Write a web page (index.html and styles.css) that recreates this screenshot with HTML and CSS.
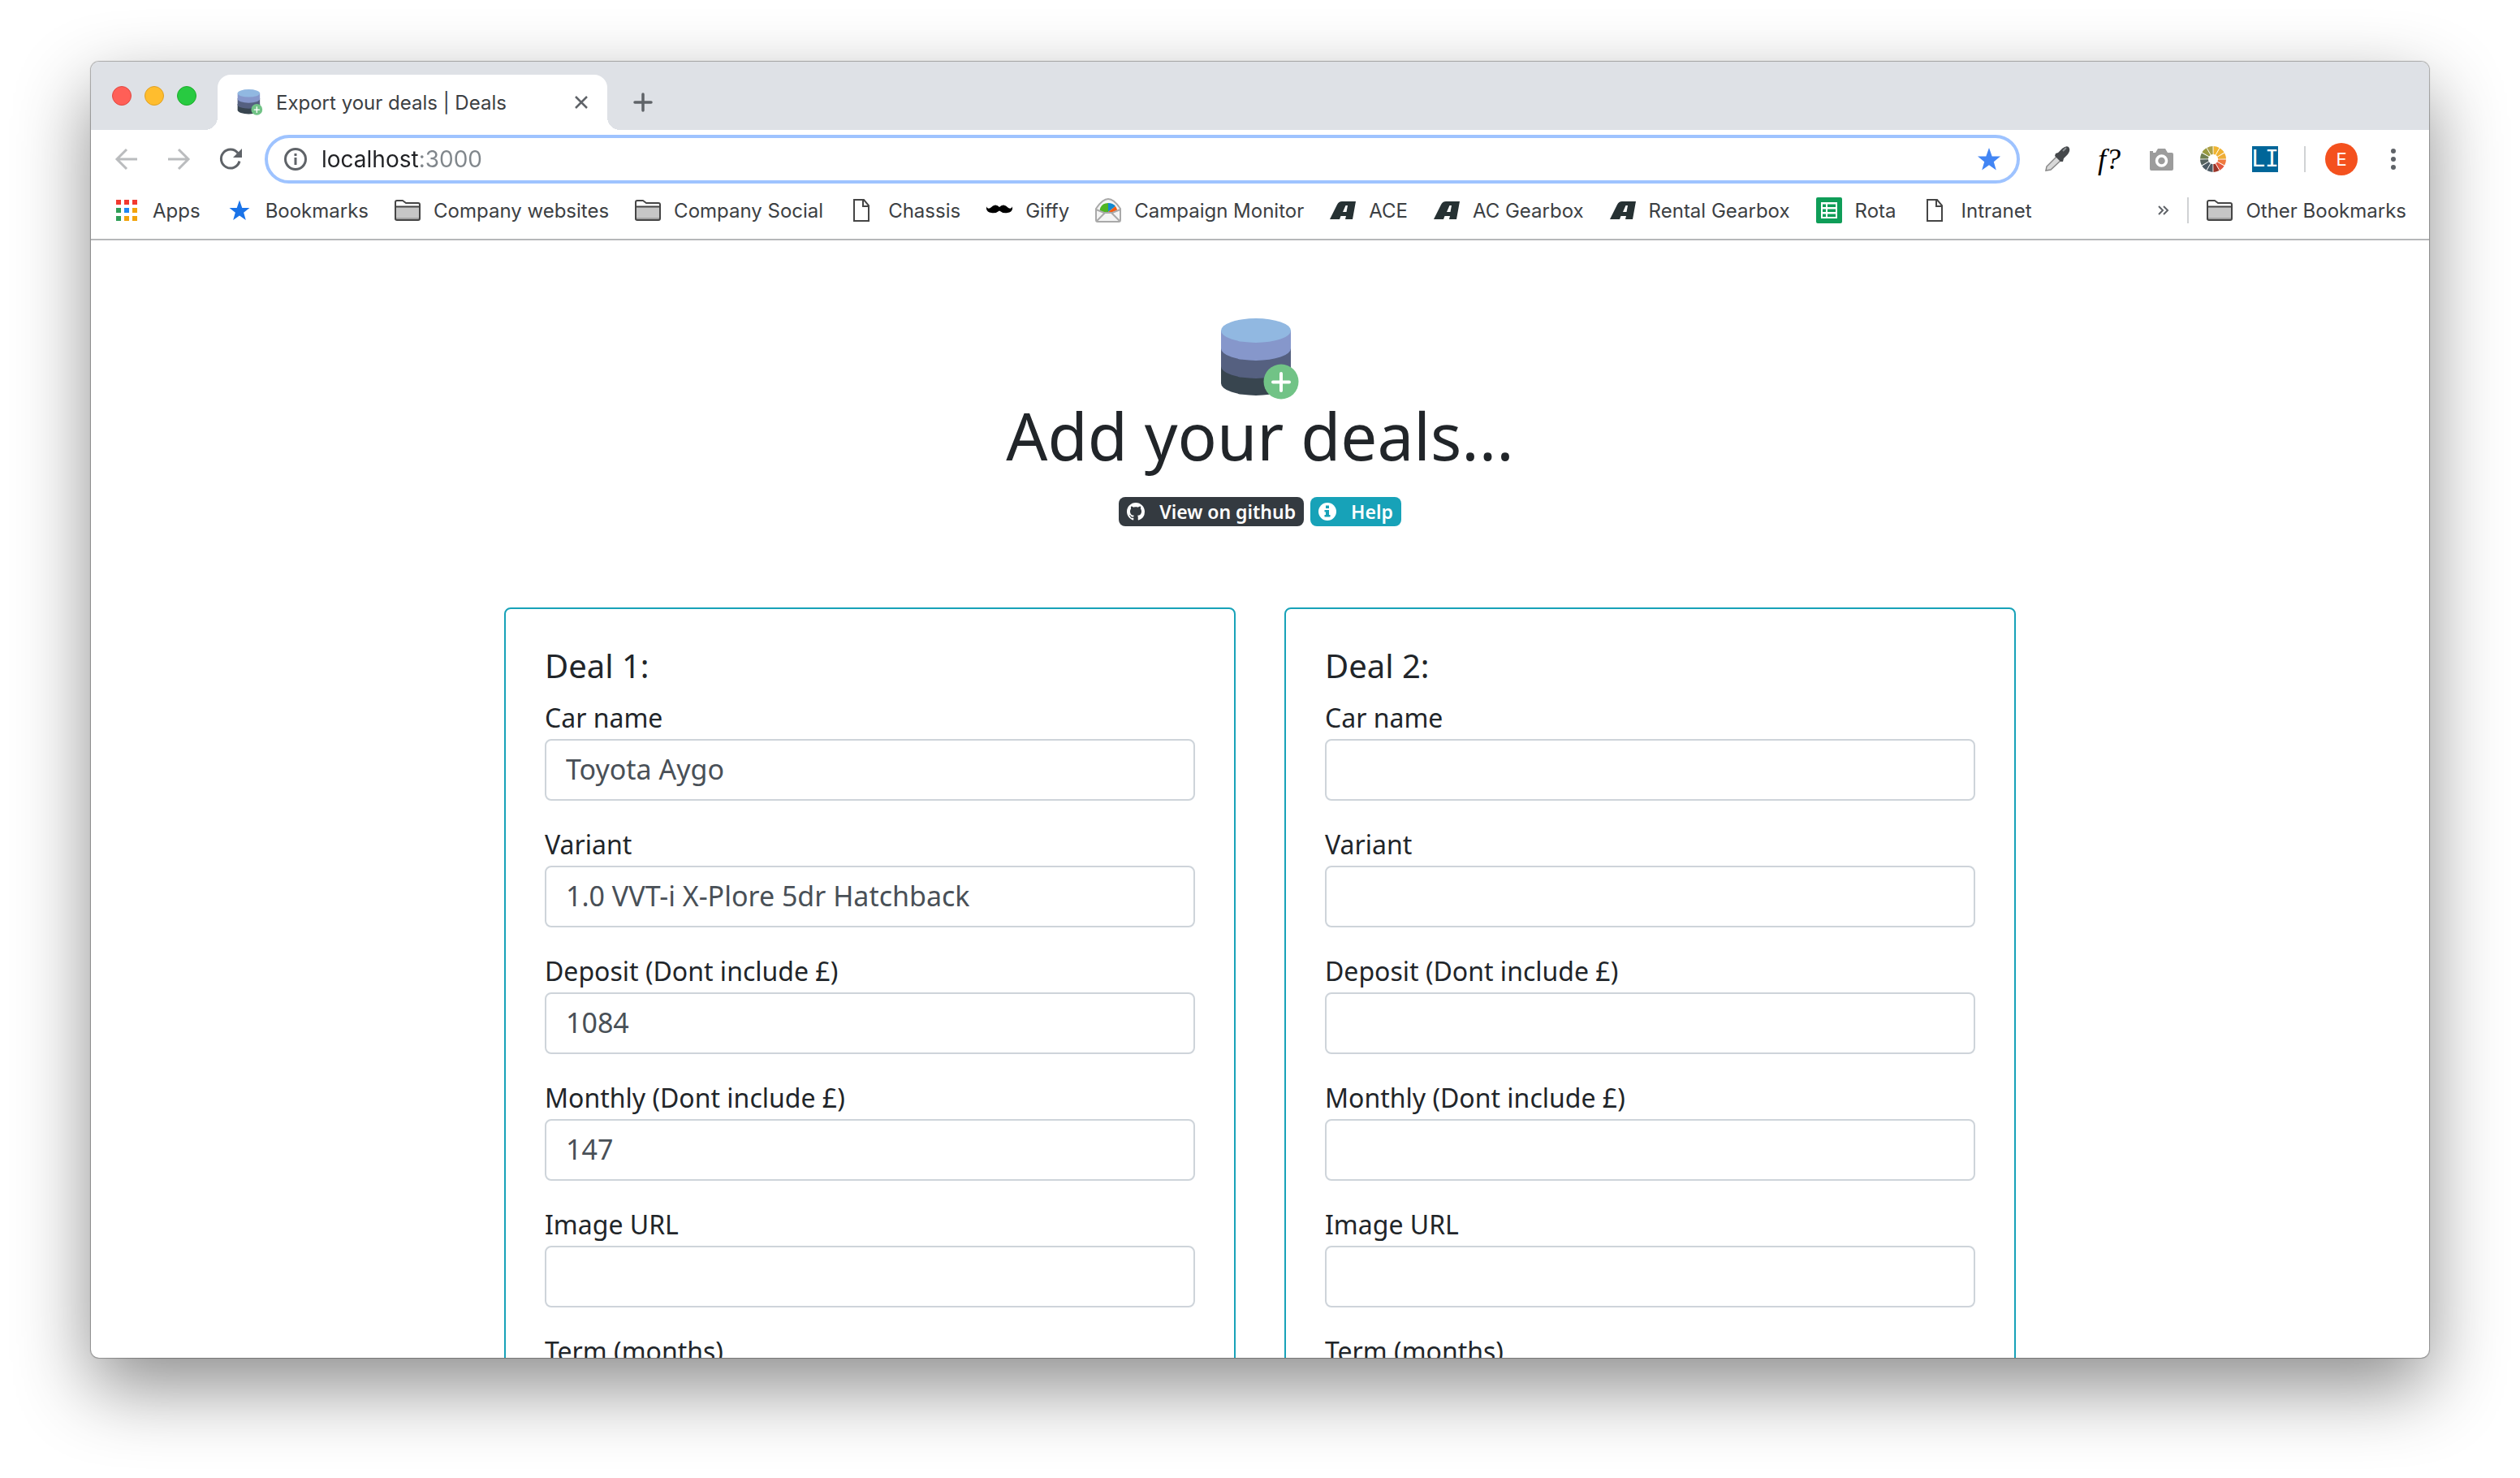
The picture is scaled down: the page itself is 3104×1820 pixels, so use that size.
FILE: index.html
```
<!DOCTYPE html>
<html lang="en">
<head>
<meta charset="utf-8">
<title>Export your deals | Deals</title>
<link rel="stylesheet" href="styles.css">
</head>
<body>
<svg class="defs" aria-hidden="true">
  <symbol id="database" viewBox="0 0 96 100">
    <path fill="#38454f" d="M0 56V80A43 15 0 0 0 86 80V56Z"/>
    <path fill="#556080" d="M0 34V59A43 15 0 0 0 86 59V34Z"/>
    <path fill="#8697cb" d="M0 15V37A43 15 0 0 0 86 37V15Z"/>
    <ellipse fill="#91b8e1" cx="43" cy="15" rx="43" ry="15"/>
    <circle fill="#71c386" cx="74" cy="78" r="21.5"/>
    <path stroke="#fff" stroke-width="4" stroke-linecap="round" d="M64 78.500H84M74 68V89"/>
  </symbol>
  <symbol id="folder" viewBox="0 0 32 32">
    <path fill="#fff" d="M1 27V6Q1 4 3 4H10L14 7H29Q31 7 31 9V27Z"/>
    <path fill="#c6c6c6" d="M1 12H31V27H1Z"/>
    <path fill="#a3a3a3" d="M1 25H31V28H1Z"/>
    <path fill="none" stroke="#454545" stroke-width="2" stroke-linejoin="round" d="M1 27V6Q1 4 3 4H10L14 7H29Q31 7 31 9V26Q31 28 29 28H3Q1 28 1 26ZM1 11.500H31"/>
  </symbol>
  <symbol id="page" viewBox="0 0 32 32">
    <path fill="#fff" stroke="#454545" stroke-width="2" d="M6 3H18L24 10V29H6ZM17 3V11H24"/>
  </symbol>
  <symbol id="star" viewBox="0 0 32 32">
    <path d="M16 2L19.700 12.600H30L21.800 19.200L24.800 29.500L16 23.200L7.200 29.500L10.200 19.200L2 12.600H12.300Z"/>
  </symbol>
  <symbol id="gearbox" viewBox="0 0 32 32">
    <path fill="#263133" fill-rule="evenodd" d="M0 27L9 9Q11 5 15 5H32L28 27H19L20 23H13.500L12 27ZM16 18H20.500L22 10H19.500Z"/>
  </symbol>
</svg>

<main class="window">
  <header class="tabs">
    <div class="lights">
      <button class="light close" aria-label="Close window"></button>
      <button class="light minimise" aria-label="Minimise window"></button>
      <button class="light zoom" aria-label="Zoom window"></button>
    </div>
    <div class="tab">
      <svg class="favicon"><use href="#database"/></svg>
      <span class="tab-title">Export your deals | Deals</span>
      <button class="icon-button" aria-label="Close tab"><svg class="cross" viewBox="0 0 16 16"><path d="M1 1L15 15M15 1L1 15" stroke="#5f6368" stroke-width="2.500"/></svg></button>
    </div>
    <button class="icon-button new-tab" aria-label="New tab"><svg class="plus" viewBox="0 0 24 24"><path d="M12 2V22M2 12H22" stroke="#5f6368" stroke-width="3.500" stroke-linecap="round"/></svg></button>
  </header>

  <nav class="toolbar">
    <div class="nav-buttons">
      <button class="icon-button" aria-label="Back"><svg class="icon" viewBox="0 0 32 32"><path d="M29 16H5M16 4L4 16L16 28" fill="none" stroke="#babcbe" stroke-width="3"/></svg></button>
      <button class="icon-button" aria-label="Forward"><svg class="icon" viewBox="0 0 32 32"><path d="M3 16H27M16 4L28 16L16 28" fill="none" stroke="#babcbe" stroke-width="3"/></svg></button>
      <button class="icon-button" aria-label="Reload"><svg class="icon" viewBox="0 0 32 32"><path d="M27 18.500A11.500 11.500 0 1 1 25 8.500" fill="none" stroke="#5f6368" stroke-width="3"/><path d="M30 3V14H19Z" fill="#5f6368"/></svg></button>
    </div>
    <div class="omnibox">
      <svg class="info" viewBox="0 0 28 28"><circle cx="14" cy="14" r="12.500" fill="none" stroke="#5f6368" stroke-width="3"/><path d="M14 12V21M14 7V10" stroke="#5f6368" stroke-width="3"/></svg>
      <input class="address" type="text" aria-label="Address" value="localhost:3000">
      <button class="icon-button" aria-label="Bookmark this page"><svg class="icon star-blue"><use href="#star"/></svg></button>
    </div>
    <div class="extensions">
      <button class="icon-button" aria-label="Eyedropper"><svg class="icon" viewBox="0 0 32 32"><path d="M2 30L3 25L16 12L21 17L8 29Z" fill="#d8d8d8" stroke="#888" stroke-width="1.500"/><path d="M14 9L17 8L22 3Q27-1 30 1Q33 5 29 10L24 15L23 19L20 19L13 12Z" fill="#45484b"/><path d="M23 6L27 2" stroke="#8b8f92" stroke-width="2"/></svg></button>
      <button class="icon-button font-icon" aria-label="WhatFont">f?</button>
      <button class="icon-button" aria-label="Screenshot"><svg class="icon" viewBox="0 0 32 32"><path d="M2 10V6H6V8H9L12 3H21L24 8H29Q31 8 31 10V28Q31 30 29 30H4Q2 30 2 28Z" fill="#9c9c9c"/><circle cx="16.500" cy="18" r="6" fill="none" stroke="#fff" stroke-width="3.500"/></svg></button>
      <button class="icon-button" aria-label="Colour wheel"><svg class="icon" viewBox="-16 -16 32 32">
        <defs><path id="wedge" d="M.5-16A16 16 0 0 1 7.600-14.100L2.800-5.400A6 6 0 0 0 .5-6Z"/></defs>
        <use href="#wedge" fill="#efb430"/>
        <use href="#wedge" fill="#f0b232" transform="rotate(30)"/>
        <use href="#wedge" fill="#efad36" transform="rotate(60)"/>
        <use href="#wedge" fill="#f07a3e" transform="rotate(90)"/>
        <use href="#wedge" fill="#e2573f" transform="rotate(120)"/>
        <use href="#wedge" fill="#9c3428" transform="rotate(150)"/>
        <use href="#wedge" fill="#4d5b65" transform="rotate(180)"/>
        <use href="#wedge" fill="#4d5b65" transform="rotate(210)"/>
        <use href="#wedge" fill="#55625f" transform="rotate(240)"/>
        <use href="#wedge" fill="#6f7f50" transform="rotate(270)"/>
        <use href="#wedge" fill="#989a40" transform="rotate(300)"/>
        <use href="#wedge" fill="#aca148" transform="rotate(330)"/>
      </svg></button>
      <button class="icon-button lorem-icon" aria-label="Lorem Ipsum">LI</button>
    </div>
    <span class="divider"></span>
    <button class="avatar" aria-label="Profile">E</button>
    <button class="icon-button" aria-label="Menu"><svg class="dots" viewBox="0 0 8 28" fill="#5f6368"><circle cx="4" cy="4" r="3"/><circle cx="4" cy="14" r="3"/><circle cx="4" cy="24" r="3"/></svg></button>
  </nav>

  <nav class="bookmarks">
    <a class="bookmark" href="#"><svg class="icon" viewBox="0 0 32 32"><path fill="#f2392f" d="M3 3h6v6H3zM13 3h6v6h-6zM23 3h6v6h-6z"/><path fill="#2f9e57" d="M3 13h6v6H3zM3 23h6v6H3z"/><path fill="#1f88f2" d="M13 13h6v6h-6z"/><path fill="#f2a30c" d="M23 13h6v6h-6zM13 23h6v6h-6zM23 23h6v6h-6z"/></svg>Apps</a>
    <a class="bookmark" href="#"><svg class="icon star-mark" viewBox="-2 -2 36 36"><use href="#star" width="32" height="32"/></svg>Bookmarks</a>
    <a class="bookmark" href="#"><svg class="icon"><use href="#folder"/></svg>Company websites</a>
    <a class="bookmark" href="#"><svg class="icon"><use href="#folder"/></svg>Company Social</a>
    <a class="bookmark" href="#"><svg class="icon"><use href="#page"/></svg>Chassis</a>
    <a class="bookmark" href="#"><svg class="icon" viewBox="0 0 32 32"><path d="M0 11Q1 15 5 13Q8 9.500 11 9.500Q14 9.500 16 12Q18 9.500 21 9.500Q24 9.500 27 13Q31 15 32 11Q33 18 26 19Q20 20 16 16.500Q12 20 6 19Q-1 18 0 11Z"/></svg>Giffy</a>
    <a class="bookmark" href="#"><svg class="icon" viewBox="0 0 32 32"><path fill="#f4f4f4" stroke="#a9a9a9" stroke-width="2" stroke-linejoin="round" d="M1 14Q9 2 16 2Q23 2 31 14V28Q31 30 29 30H3Q1 30 1 28Z"/><path fill="#4fb523" d="M16 18H8Q5 18 6 14Q8 7 16 7Z"/><path fill="#1289cf" d="M16 18V7Q22 7 25 11Z"/><path fill="#f85a10" d="M16 18L25 11Q27 14 27 16L22 18Z"/><path fill="none" stroke="#a9a9a9" stroke-width="2" d="M1 15L11 19H21L31 15M2 29L12 19M30 29L20 19"/></svg>Campaign Monitor</a>
    <a class="bookmark" href="#"><svg class="icon"><use href="#gearbox"/></svg>ACE</a>
    <a class="bookmark" href="#"><svg class="icon"><use href="#gearbox"/></svg>AC Gearbox</a>
    <a class="bookmark" href="#"><svg class="icon"><use href="#gearbox"/></svg>Rental Gearbox</a>
    <a class="bookmark" href="#"><svg class="icon" viewBox="0 0 32 32"><rect width="32" height="32" rx="2" fill="#0f9d58"/><path fill="#fff" fill-rule="evenodd" d="M6 6H26V26H6ZM8 8.500V12H12V8.500ZM14 8.500V12H24V8.500ZM8 14.500V18H12V14.500ZM14 14.500V18H24V14.500ZM8 20.500V24H12V20.500ZM14 20.500V24H24V20.500Z"/></svg>Rota</a>
    <a class="bookmark" href="#"><svg class="icon"><use href="#page"/></svg>Intranet</a>
    <button class="icon-button more" aria-label="More bookmarks"><svg class="chevrons" viewBox="0 0 14 12"><path d="M1 1L6 6L1 11M7 1L12 6L7 11" fill="none" stroke="#5f6368" stroke-width="2"/></svg></button>
    <span class="divider"></span>
    <a class="bookmark" href="#"><svg class="icon"><use href="#folder"/></svg>Other Bookmarks</a>
  </nav>

  <section class="page">
    <header class="intro">
      <svg class="logo"><use href="#database"/></svg>
      <h1 class="title">Add your deals...</h1>
      <div class="badges">
        <a class="badge dark" href="#"><svg class="badge-icon" viewBox="0 0 16 16"><path fill="#fff" d="M8 0C3.580 0 0 3.580 0 8c0 3.540 2.290 6.530 5.470 7.590.4.070.55-.17.55-.38 0-.19-.01-.82-.01-1.490-2.010.37-2.530-.49-2.690-.94-.09-.23-.48-.94-.82-1.130-.28-.15-.68-.52-.01-.53.63-.01 1.080.58 1.230.82.72 1.210 1.870.87 2.330.66.07-.52.28-.87.51-1.070-1.780-.2-3.640-.89-3.640-3.950 0-.87.31-1.590.82-2.150-.08-.2-.36-1.020.08-2.120 0 0 .67-.21 2.200.82.64-.18 1.320-.27 2-.27s1.360.09 2 .27c1.530-1.040 2.200-.82 2.200-.82.44 1.100.16 1.920.08 2.120.51.56.82 1.270.82 2.150 0 3.070-1.870 3.750-3.650 3.950.29.25.54.73.54 1.480 0 1.070-.01 1.930-.01 2.200 0 .21.15.46.55.38A8.010 8.010 0 0 0 16 8c0-4.420-3.580-8-8-8z"/></svg>View on github</a>
        <a class="badge teal" href="#"><svg class="badge-icon" viewBox="0 0 22 22"><circle cx="11" cy="11" r="11" fill="#fff"/><path fill="#17a2b8" d="M9 3.500H13V7H9ZM7.500 9H13V15H14.500V17.500H7.500V15H9V11.500H7.500Z"/></svg>Help</a>
      </div>
    </header>
    <div class="deals">
      <form class="deal">
        <h2 class="deal-title">Deal 1:</h2>
        <div class="field"><label for="name1">Car name</label><input id="name1" type="text" value="Toyota Aygo"></div>
        <div class="field"><label for="variant1">Variant</label><input id="variant1" type="text" value="1.0 VVT-i X-Plore 5dr Hatchback"></div>
        <div class="field"><label for="deposit1">Deposit (Dont include £)</label><input id="deposit1" type="text" value="1084"></div>
        <div class="field"><label for="monthly1">Monthly (Dont include £)</label><input id="monthly1" type="text" value="147"></div>
        <div class="field"><label for="image1">Image URL</label><input id="image1" type="text"></div>
        <div class="field"><label for="term1">Term (months)</label><input id="term1" type="text"></div>
      </form>
      <form class="deal">
        <h2 class="deal-title">Deal 2:</h2>
        <div class="field"><label for="name2">Car name</label><input id="name2" type="text"></div>
        <div class="field"><label for="variant2">Variant</label><input id="variant2" type="text"></div>
        <div class="field"><label for="deposit2">Deposit (Dont include £)</label><input id="deposit2" type="text"></div>
        <div class="field"><label for="monthly2">Monthly (Dont include £)</label><input id="monthly2" type="text"></div>
        <div class="field"><label for="image2">Image URL</label><input id="image2" type="text"></div>
        <div class="field"><label for="term2">Term (months)</label><input id="term2" type="text"></div>
      </form>
    </div>
  </section>
</main>
</body>
</html>
```
FILE: styles.css
```
* {
  box-sizing: border-box;
}

body {
  margin: 0;
  height: 100vh;
  display: flex;
  padding: 76px 112px 148px;
  background: #fff;
  font-family: Inter, sans-serif;
  font-size: 24px;
  color: #3c4043;
}

button {
  font: inherit;
  border: 0;
  padding: 0;
  background: none;
}

svg {
  display: block;
  flex: none;
}

.defs {
  display: none;
}

/* Browser window */
.window {
  flex: 1;
  min-width: 0;
  display: flex;
  flex-direction: column;
  overflow: hidden;
  border-radius: 10px;
  background: #fff;
  box-shadow: 0 0 1px 1px rgba(0, 0, 0, 0.3), 0 36px 92px rgba(0, 0, 0, 0.45);
}

.tabs {
  flex: none;
  display: flex;
  align-items: flex-end;
  height: 84px;
  padding-left: 26px;
  background: #dee1e6;
}

.lights {
  display: flex;
  align-items: center;
  gap: 16px;
  height: 84px;
  width: 130px;
}

.light {
  width: 24px;
  height: 24px;
  border-radius: 50%;
  border: 1px solid;
}

.close { background: #ff5f57; border-color: #e14942; }
.minimise { background: #ffbd2e; border-color: #dfa023; }
.zoom { background: #28ca41; border-color: #1dad2b; }

.tab {
  position: relative;
  display: flex;
  align-items: center;
  width: 480px;
  height: 68px;
  padding: 0 24px;
  border-radius: 16px 16px 0 0;
  background: #fff;
}

.tab::before,
.tab::after {
  content: "";
  position: absolute;
  bottom: 0;
  width: 16px;
  height: 16px;
}

.tab::before {
  right: 100%;
  background: radial-gradient(circle at 0 0, transparent 16px, #fff 16px);
}

.tab::after {
  left: 100%;
  background: radial-gradient(circle at 100% 0, transparent 16px, #fff 16px);
}

.favicon {
  width: 32px;
  height: 32px;
}

.tab-title {
  flex: 1;
  padding-left: 16px;
}

.cross {
  width: 16px;
  height: 16px;
}

.new-tab {
  height: 68px;
  margin-left: 32px;
}

.plus {
  width: 24px;
  height: 24px;
}

/* Toolbar */
.toolbar {
  flex: none;
  display: flex;
  align-items: center;
  height: 72px;
  padding: 0 40px 0 28px;
}

.nav-buttons,
.extensions {
  display: flex;
  gap: 32px;
}

.icon {
  width: 32px;
  height: 32px;
}

.omnibox {
  flex: 1;
  display: flex;
  align-items: center;
  height: 60px;
  margin: 0 30px 0 26px;
  padding: 0 18px 0 20px;
  border: 4px solid #9ec3ff;
  border-radius: 30px;
}

.info {
  width: 28px;
  height: 28px;
}

.address {
  flex: 1;
  height: 40px;
  margin-left: 18px;
  padding: 0;
  border: 0;
  font: 28px Inter, sans-serif;
  color: transparent;
  background: linear-gradient(to right, #202124 121px, #80868b 121px);
  background-clip: text;
}

.star-blue { fill: #4285f4; }
.star-mark { fill: #1a73e8; }

.font-icon {
  width: 32px;
  height: 32px;
  font: italic 36px/32px "Liberation Serif", serif;
  color: #000;
}

.lorem-icon {
  width: 32px;
  height: 32px;
  background: #006699;
  font: 28px/32px "DejaVu Sans Mono", monospace;
  color: #fff;
  display: flex;
  justify-content: center;
}

.divider {
  width: 2px;
  height: 32px;
  background: #d0d2d4;
}

.toolbar .divider {
  margin-left: 32px;
}

.avatar {
  width: 40px;
  height: 40px;
  margin: 0 40px 0 24px;
  border-radius: 50%;
  background: #f4511e;
  color: #fff;
  font-size: 22px;
}

.dots {
  width: 8px;
  height: 28px;
}

/* Bookmarks bar */
.bookmarks {
  flex: none;
  display: flex;
  align-items: center;
  gap: 32px;
  height: 64px;
  padding: 0 28px 8px;
  border-bottom: 2px solid #b6b7b9;
  white-space: nowrap;
}

.bookmark {
  display: flex;
  align-items: center;
  gap: 16px;
  color: inherit;
  text-decoration: none;
}

.more {
  margin-left: auto;
}

.chevrons {
  width: 14px;
  height: 12px;
}

.bookmarks .divider {
  margin: 0 -10px;
}

/* Deals page */
.page {
  flex: 1;
  min-height: 0;
  overflow: hidden;
  padding-top: 96px;
  font-family: "Noto Sans", sans-serif;
  font-size: 32px;
  line-height: 48px;
  color: #212529;
}

.intro {
  display: flex;
  flex-direction: column;
  align-items: center;
}

.logo {
  width: 96px;
  height: 100px;
}

.title {
  margin: 0;
  font-size: 80px;
  font-weight: 400;
  line-height: 88px;
}

.badges {
  display: flex;
  gap: 8px;
  margin: 32px 0 100px;
}

.badge {
  display: flex;
  align-items: center;
  gap: 18px;
  height: 36px;
  padding: 0 10px;
  border-radius: 8px;
  color: #fff;
  font-size: 23px;
  font-weight: 600;
  text-decoration: none;
}

.dark { background: #343a40; }
.teal { background: #17a2b8; }

.badge-icon {
  width: 22px;
  height: 22px;
}

.deals {
  display: grid;
  grid-template-columns: 1fr 1fr;
  gap: 60px;
  max-width: 1862px;
  margin: 0 auto;
}

.deal {
  padding: 46px 48px;
  border: 2px solid #17a2b8;
  border-radius: 8px;
}

.deal-title {
  margin: 0 0 16px;
  font-size: 40px;
  font-weight: 400;
  line-height: 48px;
}

.field {
  display: flex;
  flex-direction: column;
  gap: 2px;
  margin-bottom: 30px;
}

.field input {
  height: 76px;
  padding: 0 24px 2px;
  border: 2px solid #ced4da;
  border-radius: 8px;
  background: #fff;
  color: #495057;
  font: 34px "Noto Sans", sans-serif;
}
```
